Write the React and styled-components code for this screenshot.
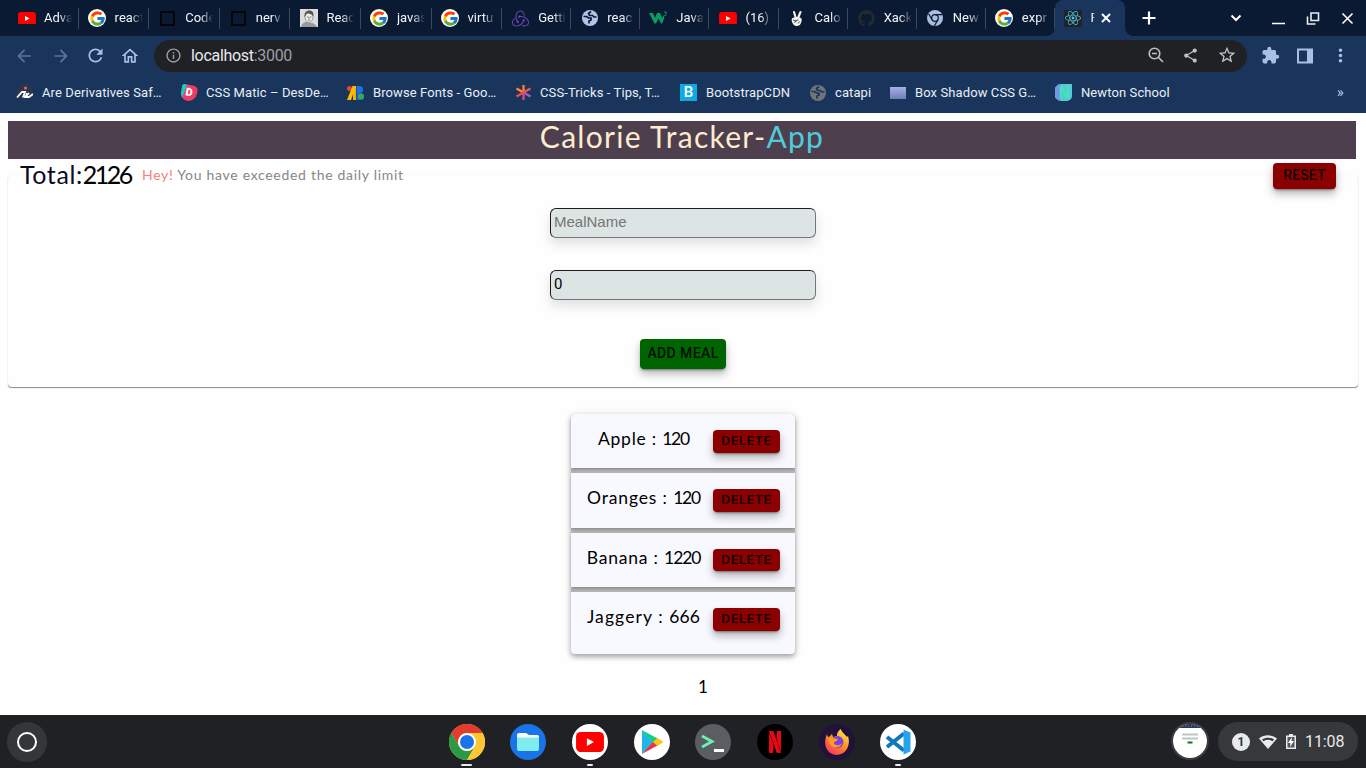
import React from "react";
import styled, { createGlobalStyle } from "styled-components";
import { FcGoogle } from "react-icons/fc";
import { FaGithub, FaReact } from "react-icons/fa";
import { SiRedux, SiNetflix } from "react-icons/si";
import {
  MdExtension, MdShare, MdStarBorder, MdMoreVert, MdRefresh,
  MdArrowBack, MdArrowForward, MdInfoOutline, MdOutlineHome,
} from "react-icons/md";

const Global = createGlobalStyle`
  * { box-sizing: border-box; }
  body { margin: 0; background: #fefefe; overflow: hidden; font-family: Roboto, sans-serif; }
  svg { display: block; flex: none; }
`;

const Screen = styled.div`
  width: 1366px;
  height: 768px;
  display: flex;
  flex-direction: column;
`;

/* ---------- browser ---------- */
const TabStrip = styled.div`
  height: 36px;
  background: #0a1a33;
  display: flex;
  padding-left: 8px;
`;
const Tab = styled.div`
  width: ${(p) => p.$w}px;
  flex: none;
  height: 36px;
  display: flex;
  align-items: center;
  padding-left: 9.5px;
  background: linear-gradient(#39485d, #39485d) right 8px / 1px 21px no-repeat;
`;
const TabIcon = styled.span`
  width: 18px;
  height: 18px;
  flex: none;
  display: flex;
  align-items: center;
  justify-content: center;
  border-radius: ${(p) => (p.$round ? "50%" : "0")};
  background: ${(p) => (p.$round ? "#fff" : "transparent")};
`;
const TabTitle = styled.span`
  margin-left: 8.5px;
  width: ${(p) => p.$w || 28}px;
  overflow: hidden;
  white-space: nowrap;
  font-size: 13px;
  line-height: 18px;
  color: #f2f5fa;
  mask-image: linear-gradient(90deg, #000 55%, transparent 100%);
`;
const ActiveTab = styled.div`
  position: relative;
  width: 70px;
  height: 36px;
  display: flex;
  align-items: center;
  padding-left: 9px;
  background: #1a355b;
  border-radius: 8px 8px 0 0;
  &::before, &::after {
    content: "";
    position: absolute;
    bottom: 0;
    width: 8px;
    height: 8px;
  }
  &::before { left: -8px; background: radial-gradient(circle at 0 0, transparent 7.5px, #1a355b 8px); }
  &::after { right: -8px; background: radial-gradient(circle at 100% 0, transparent 7.5px, #1a355b 8px); }
`;
const ReactBadge = styled.span`
  width: 18px;
  height: 17px;
  display: grid;
  place-items: center;
  background: #20232a;
  color: #53c1de;
`;
const StripControls = styled.div`
  flex: 1;
  display: flex;
  align-items: center;
  padding-left: 17px;
  color: #fff;
`;
const WindowControls = styled.div`
  margin-left: auto;
  margin-right: 12px;
  display: flex;
  align-items: center;
  gap: 21px;
`;
const Toolbar = styled.div`
  height: 39px;
  background: #1a355b;
  display: flex;
  align-items: center;
  padding: 0 12px 0 14px;
  color: #a9bfe4;
`;
const NavButtons = styled.div`
  display: flex;
  align-items: center;
  gap: 17px;
  width: 140px;
  flex: none;
`;
const Dim = styled.span`
  opacity: 0.45;
`;
const Omnibox = styled.div`
  width: 1093px;
  height: 32px;
  margin-top: 1px;
  border-radius: 16px;
  background: #202124;
  color: #bdc1c6;
  display: flex;
  align-items: center;
  padding: 0 10px 2px 11px;
`;
const Address = styled.span`
  margin-left: 9px;
  font-size: 16px;
  letter-spacing: -0.3px;
  color: #e8eaed;
  flex: 1;
  span { color: #9aa0a6; }
`;
const OmniActions = styled.div`
  display: flex;
  align-items: center;
  gap: 18px;
`;
const RightActions = styled.div`
  display: flex;
  align-items: center;
  gap: 17px;
  margin-left: 14px;
`;
const Bookmarks = styled.div`
  height: 38px;
  background: #1a355b;
  display: flex;
  align-items: center;
  padding: 0 0 3px 16px;
  color: #e9eef6;
  font-size: 13px;
  letter-spacing: 0.1px;
`;
const Bookmark = styled.div`
  width: ${(p) => p.$w}px;
  flex: none;
  display: flex;
  align-items: center;
  gap: ${(p) => p.$gap || 9}px;
  white-space: nowrap;
`;
const BootstrapMark = styled.span`
  width: 17px;
  height: 17px;
  background: #0fa9e6;
  color: #fff;
  font: 500 15px/17px Roboto, sans-serif;
  text-align: center;
`;
const More = styled.span`
  margin-left: auto;
  margin-right: 22px;
  padding-bottom: 2px;
  color: #b7c9ea;
  font-size: 15px;
`;

/* ---------- application ---------- */
const Page = styled.main`
  height: 602px;
  display: flex;
  flex-direction: column;
  padding: 8px 8px 0;
  background: #fefefe;
  font-family: Lato, sans-serif;
  color: #000;
`;
const Banner = styled.h1`
  margin: 0 2px 0 0;
  height: 38px;
  background: #4d3f4d;
  color: #ffebcd;
  font-size: 30px;
  font-weight: 400;
  line-height: 31px;
  letter-spacing: 1.3px;
  text-align: center;
  span { color: #51cbdc; }
`;
const Summary = styled.div`
  position: relative;
  height: 16px;
  display: flex;
  align-items: flex-start;
  padding: 0 22px 0 12px;
`;
const Total = styled.span`
  width: 122px;
  font-size: 25px;
  line-height: 30px;
  letter-spacing: 0.6px;
  white-space: nowrap;
  color: #0b0b24;
  span { color: #000; letter-spacing: -2.5px; }
`;
const Warning = styled.span`
  flex: 1;
  font-size: 14px;
  line-height: 32px;
  letter-spacing: 0.7px;
  color: #8b8587;
  span { color: #fa8080; }
`;
const Button = styled.button`
  flex: none;
  border: 0;
  padding: 0 0 ${(p) => p.$lift || 0}px;
  width: ${(p) => p.$w}px;
  height: ${(p) => p.$h}px;
  border-radius: 4px;
  background: ${(p) => p.$bg};
  color: rgba(0, 0, 0, 0.87);
  font: 500 ${(p) => p.$size || 13}px Roboto, sans-serif;
  letter-spacing: ${(p) => p.$track || 0.4}px;
  text-transform: uppercase;
  white-space: nowrap;
  box-shadow: 0 3px 1px -2px rgba(0,0,0,.2), 0 2px 2px rgba(0,0,0,.14), 0 5px 8px rgba(0,0,0,.28);
`;
const FormPaper = styled.section`
  height: 212px;
  border-radius: 4px;
  box-shadow: 0 1px 1px -0.5px rgba(0,0,0,.45), 0 -1px 0 -0.5px rgba(0,0,0,.03);
  display: flex;
  flex-direction: column;
  align-items: center;
  padding-top: 33px;
`;
const Field = styled.input`
  width: 266px;
  height: 30px;
  margin: 0 0 ${(p) => p.$after}px;
  padding: ${(p) => (p.$face ? "1px 3px 3px" : "0 3px 4px")};
  border: 1px solid #767676;
  border-top-color: #1c1c1c;
  border-left-color: #1c1c1c;
  border-radius: 6px;
  background: #dce5e3;
  color: #000;
  font: 15px ${(p) => p.$face || '"Liberation Sans"'}, sans-serif;
  box-shadow: 0 6px 12px rgba(0,0,0,.12);
  outline: none;
  &::placeholder { color: #757575; opacity: 1; }
`;
const MealList = styled.section`
  width: 224px;
  margin: 27px auto 0;
  display: flex;
  flex-direction: column;
  gap: 5px;
  border-radius: 4px;
  background: #b3b3b3;
  box-shadow: 0 3px 5px rgba(0,0,0,.28), 0 1px 8px rgba(0,0,0,.14);
  align-self: center;
`;
const MealRow = styled.div`
  height: ${(p) => p.$h}px;
  display: flex;
  align-items: flex-start;
  padding: 16px 15px 0 15px;
  background: #f8f8ff;
  box-shadow: ${(p) => (p.$last ? "none" : "0 2px 3px -1px rgba(0,0,0,.3)")};
  &:first-child { border-radius: 4px 4px 0 0; }
  &:last-child { border-radius: 0 0 4px 4px; }
`;
const MealName = styled.span`
  width: 115px;
  margin-right: 12px;
  text-align: center;
  white-space: nowrap;
  font-size: 17.5px;
  line-height: 18px;
  letter-spacing: ${(p) => p.$track}px;
  span { letter-spacing: ${(p) => p.$digits}px; }
`;
const PageNumber = styled.div`
  margin-top: 22px;
  padding-left: 40px;
  text-align: center;
  font-size: 17px;
  line-height: 22px;
`;

/* ---------- shelf ---------- */
const Shelf = styled.footer`
  height: 53px;
  background: #202125;
  display: flex;
  padding: 0 8px 0 7px;
`;
const Launcher = styled.div`
  width: 40px;
  height: 40px;
  margin-top: 7px;
  border-radius: 50%;
  background: #35363a;
  display: grid;
  place-items: center;
  &::after {
    content: "";
    width: 16px;
    height: 16px;
    border-radius: 50%;
    border: 2px solid #fff;
  }
`;
const Dock = styled.div`
  display: flex;
  gap: 25.7px;
  padding: 9px 0 0 401.5px;
  flex: none;
`;
const DockItem = styled.div`
  width: 36px;
  display: flex;
  flex-direction: column;
  align-items: center;
  &::after {
    content: "";
    margin-top: 4px;
    width: ${(p) => p.$mark || 0}px;
    height: 2px;
    border-radius: 1px;
    background: #e8eaed;
  }
`;
const Disc = styled.div`
  width: 36px;
  height: 36px;
  border-radius: 50%;
  overflow: hidden;
  display: grid;
  place-items: center;
  background: ${(p) => p.$bg};
`;
const Tray = styled.div`
  display: flex;
  gap: 9px;
  padding-top: 7px;
  margin-left: auto;
`;
const Thumb = styled.div`
  width: 38px;
  height: 38px;
  border-radius: 50%;
  border: 2px solid #3b3c40;
  overflow: hidden;
`;
const Status = styled.div`
  width: 140px;
  height: 39px;
  border-radius: 20px;
  background: #37383b;
  color: #e8eaed;
  display: flex;
  align-items: center;
  padding-left: 14px;
  font-size: 16px;
`;
const Count = styled.span`
  width: 18px;
  height: 18px;
  border-radius: 50%;
  background: #e8eaed;
  color: #303134;
  font: 700 12px/18px Roboto, sans-serif;
  text-align: center;
`;
const Clock = styled.span`
  margin-left: 9px;
  letter-spacing: -0.1px;
`;

/* ---------- drawings ---------- */
const YouTube = ({ w = 18 }) => (
  <svg width={w} height={w * 0.72} viewBox="0 0 18 13">
    <rect width="18" height="13" rx="3" fill="#f00" />
    <path d="M7 4v5l4.600-2.500z" fill="#fff" />
  </svg>
);
const Square = () => (
  <svg width="15" height="15" viewBox="0 0 15 15">
    <rect x="1" y="1" width="13" height="13" fill="none" stroke="#000" strokeWidth="1.600" />
  </svg>
);
const Portrait = () => (
  <svg width="18" height="18" viewBox="0 0 18 18">
    <rect width="18" height="18" fill="#dcdcdc" />
    <path d="M1 18c1-4 4-5 5-5l5 1c3 0 5 2 6 4z" fill="#999" />
    <ellipse cx="9" cy="8" rx="4" ry="5.300" fill="#eee" stroke="#777" strokeWidth=".7" />
    <path d="M4.500 8C4 3 7 1 10 1.500s4 3 3.300 6C12 5 9 4 7 4.500z" fill="#555" />
    <path d="M7 8h1.500M10 8h1.500M8 11h2.500M9 8v2" stroke="#555" strokeWidth=".7" />
  </svg>
);
const Globe = ({ color, land }) => (
  <svg width="16" height="16" viewBox="0 0 16 16">
    <circle cx="8" cy="8" r="8" fill={color} />
    <path d="M1.500 6.500h3l2 1.500h2.500v2l-2 1v2.500" fill="none" stroke={land} strokeWidth="1.700" />
    <path d="M9 1.500L6.500 3.500l1 2h3l1.500 1.500h2.500" fill="none" stroke={land} strokeWidth="1.700" />
  </svg>
);
const Zigzag = () => (
  <svg width="19" height="14" viewBox="0 0 19 14">
    <path d="M0 2h4l2 5 2-5h3l2 5 1.500-2.500 1 2L13 12.500h-1L9.500 7.500 7 12.500H5.500z" fill="#0a9d63" />
    <path d="M15 1h2.500l-1.300 1.500c2 .2 1.500 2.500-1 2" fill="none" stroke="#0a9d63" strokeWidth=".9" />
  </svg>
);
const Victory = () => (
  <svg width="14" height="17" viewBox="0 0 14 17">
    <path d="M4 2l1.800 6M10.500 2L8 8" stroke="#f6f3ea" strokeWidth="2.100" strokeLinecap="round" />
    <path d="M2 8.500c2-1.500 6-2 9-.5 1.200 1 .8 4-.5 6-1.500 2.500-5 2.500-6.800.7C2.200 13 1 10.500 2 8.500z" fill="#f6f3ea" />
    <path d="M3 10l3 .8 2.500-1M4 12.500l2.500-1.200M8 13.500l1.500-2" fill="none" stroke="#3b3a36" strokeWidth=".9" />
  </svg>
);
const ChromeMono = () => (
  <svg width="16" height="16" viewBox="0 0 16 16">
    <circle cx="8" cy="8" r="8" fill="#a9bddf" />
    <circle cx="8" cy="8" r="3.900" fill="#0a1a33" />
    <circle cx="8" cy="8" r="2.700" fill="#a9bddf" />
    <path d="M8 4.600h7.200M5.100 9.800L1.600 3.700M10.900 9.800L7.400 15.900" stroke="#0a1a33" strokeWidth="1.200" />
  </svg>
);
const ZoomOut = () => (
  <svg width="16" height="16" viewBox="0 0 16 16" fill="none" stroke="#bdc1c6" strokeWidth="1.600">
    <circle cx="6.500" cy="6.500" r="5.300" />
    <path d="M10.500 10.500l4.500 4.500M4 6.500h5" />
  </svg>
);
const Derivatives = () => (
  <svg width="17" height="17" viewBox="0 0 17 17">
    <circle cx="8.500" cy="8" r="8" fill="#2b3551" />
    <path d="M1 13.500L6 8h3l-1.700 4.500 2.700-.2 3-3.300M11 9l-1.500 4h3.500l4-3" fill="none" stroke="#fff" strokeWidth="1.800" />
    <circle cx="9.500" cy="4" r="1.500" fill="#ef6a4a" />
  </svg>
);
const MaticMark = styled.span`
  width: 16px;
  height: 16px;
  border-radius: 15% 35% 65% 55%;
  transform: rotate(10deg);
  background: linear-gradient(100deg, #20c8b8 0 24%, #f23a67 25%);
  color: #fff;
  font: 900 11px/16px Roboto, sans-serif;
  text-align: center;
`;
const FontsIcon = () => (
  <svg width="17" height="14" viewBox="0 0 17 14">
    <circle cx="2.500" cy="2.500" r="2.500" fill="#ea4335" />
    <path d="M6 0h3v14H6z" fill="#f9ab00" />
    <path d="M5.500 0H9L4 14H0z" fill="#fbbc04" />
    <path d="M9.500 0h3a3.500 3.500 0 010 7h-3z" fill="#1a73e8" />
    <path d="M9.500 7h4a3.500 3.500 0 010 7h-4z" fill="#1967d2" />
    <circle cx="14" cy="10.500" r="3" fill="#34a853" />
  </svg>
);
const Asterisk = () => (
  <svg width="17" height="17" viewBox="0 0 17 17" strokeWidth="2.400">
    <path d="M8.500 1v7.500" stroke="#ff7a3c" />
    <path d="M8.500 8.500V16" stroke="#d94a78" />
    <path d="M1.500 4.500l7 4" stroke="#ff8a1e" />
    <path d="M8.500 8.500l7 4" stroke="#8e64cf" />
    <path d="M15.500 4.500l-7 4" stroke="#f0524f" />
    <path d="M8.500 8.500l-7 4" stroke="#e8456a" />
  </svg>
);
const Swatch = () => (
  <svg width="16" height="12" viewBox="0 0 16 12">
    <defs><linearGradient id="sw" x2="0" y2="1"><stop stopColor="#a5b1e0" /><stop offset="1" stopColor="#6d7db8" /></linearGradient></defs>
    <rect width="16" height="12" fill="url(#sw)" />
  </svg>
);
const Newton = () => (
  <svg width="17" height="17" viewBox="0 0 17 17">
    <path d="M6 0h11v12a5 5 0 01-5 5H6A7 8.500 0 016 0z" fill="#58c8d8" />
    <path d="M6 0a7 8.500 0 000 17z" fill="#6d98e6" />
    <path d="M6 2v13M6 2l7 13M13 1v14" stroke="#45e0bd" strokeWidth="2.600" />
  </svg>
);
const ChromeDisc = () => (
  <svg width="36" height="36" viewBox="0 0 36 36">
    <circle cx="18" cy="18" r="18" fill="#fbc02d" />
    <path d="M2.400 9A18 18 0 0133.600 9H18a9 9 0 00-7.800 13.500z" fill="#e33b2e" />
    <path d="M2.400 9A18 18 0 0018 36l7.800-13.500a9 9 0 01-15.600 0z" fill="#2b9a47" />
    <path d="M33.600 9A18 18 0 0118 36l7.800-13.500A9 9 0 0025 12z" fill="#fcc934" />
    <path d="M18 9h15.600l1 3H18z" fill="#fcc934" />
    <circle cx="18" cy="18" r="9" fill="#fff" />
    <circle cx="18" cy="18" r="7" fill="#1a73e8" />
  </svg>
);
const FilesIcon = () => (
  <svg width="24" height="20" viewBox="0 0 24 20">
    <path d="M1 3a2 2 0 012-2h7l3 2h8a2 2 0 012 2v12H1z" fill="#fff" />
    <path d="M1 5.500h22V17a2 2 0 01-2 2H3a2 2 0 01-2-2z" fill="#80ecf0" />
  </svg>
);
const PlayIcon = () => (
  <svg width="24" height="26" viewBox="0 0 24 26">
    <path d="M2 1v24l11-12z" fill="#1fb6e8" />
    <path d="M2 1l15.500 8.500L13 13.500z" fill="#10d07c" />
    <path d="M2 25l15.500-8.500L13 12.500z" fill="#e6364b" />
    <path d="M17.500 9l6 4-6 4-4.500-4z" fill="#fcc419" />
  </svg>
);
const TerminalIcon = () => (
  <svg width="24" height="20" viewBox="0 0 24 20" fill="none">
    <path d="M1 4l10 5.500L1 15" stroke="#6ff0b0" strokeWidth="2.800" />
    <path d="M13 18.500H23" stroke="#fff" strokeWidth="2.800" />
  </svg>
);
const FirefoxIcon = () => (
  <svg width="28" height="28" viewBox="0 0 28 28">
    <defs>
      <linearGradient id="fx" x1=".8" y1="0" x2=".2" y2="1">
        <stop stopColor="#fff04a" /><stop offset=".45" stopColor="#ff9522" /><stop offset="1" stopColor="#f4305f" />
      </linearGradient>
    </defs>
    <path d="M4 6c0 2 1 3 2 3l3-3 1 3 4-1c-.5-3 2-6 4-7 0 3 4 5 6 8l1-1c3 9-2 19-11 19S-1 18 4 6z" fill="url(#fx)" />
    <circle cx="14.500" cy="14" r="6" fill="#7a42d8" />
    <path d="M5 11c4-2 7 0 10 0-1 3-4 2-4 4 1 3 6 3 8 0-1 6-12 7-14-4z" fill="#ff9a28" />
  </svg>
);
const CodeIcon = () => (
  <svg width="26" height="26" viewBox="0 0 26 26">
    <path d="M19 4.500L2 18M2 8l17 13.500" stroke="#0f78bd" strokeWidth="4" />
    <path d="M18.500 0.500L25.500 3.500v19l-7 3z" fill="#29a3ee" />
  </svg>
);
const WindowThumb = () => (
  <svg width="34" height="34" viewBox="0 0 34 34">
    <rect width="34" height="34" fill="#fff" />
    <rect width="34" height="4" fill="#243a60" />
    <path d="M9 2h18" stroke="#cf6d73" strokeDasharray="1 2" />
    <path d="M9 10.500h16M9 14.500h16" stroke="#bfc6c5" strokeWidth="1.800" />
    <path d="M14.500 18.500h5" stroke="#087b18" strokeWidth="2" />
  </svg>
);

const google = <FcGoogle size={17} />;
const tabs = [
  ["Adva", <YouTube />],
  ["react", google, true],
  ["Code", <Square />],
  ["nerv", <Square />],
  ["Reac", <Portrait />],
  ["javas", google, true],
  ["virtu", google, true],
  ["Getti", <SiRedux size={17} color="#6a45b5" />],
  ["reac", <Globe color="#b2c5e8" land="#0a1a33" />],
  ["Java", <Zigzag />],
  ["(16) ", <YouTube />],
  ["Calo", <Victory />],
  ["Xack", <FaGithub size={17} color="#24292f" />],
  ["New", <ChromeMono />],
  ["expr", google, true],
];
const bookmarks = [
  ["Are Derivatives Saf…", <Derivatives />, 165],
  ["CSS Matic – DesDe…", <MaticMark>D</MaticMark>, 166],
  ["Browse Fonts - Goo…", <FontsIcon />, 168],
  ["CSS-Tricks - Tips, T…", <Asterisk />, 165, 8],
  ["BootstrapCDN", <BootstrapMark>B</BootstrapMark>, 130],
  ["catapi", <Globe color="#717579" land="#1a355b" />, 80],
  ["Box Shadow CSS G…", <Swatch />, 165],
  ["Newton School", <Newton />, 150],
];
const meals = [
  { name: "Apple", kcal: 120, h: 54, track: 0.75, digits: -1.2, bh: 23 },
  { name: "Oranges", kcal: 120, h: 55, track: 0.85, digits: -1.2, bh: 23 },
  { name: "Banana", kcal: 1220, h: 54, track: 0.8, digits: -1.1, bh: 22 },
  { name: "Jaggery", kcal: 666, h: 62, track: 1.1, digits: 0.1, bh: 23 },
];

function Browser() {
  return (
    <>
      <TabStrip>
        {tabs.map(([title, icon, round], i) => (
          <Tab key={i} $w={i < 7 ? 70.6 : 69.1}>
            <TabIcon $round={round}>{icon}</TabIcon>
            <TabTitle>{title}</TabTitle>
          </Tab>
        ))}
        <ActiveTab>
          <ReactBadge><FaReact size={16} /></ReactBadge>
          <TabTitle $w={5}>R</TabTitle>
          <svg width="10" height="10" viewBox="0 0 10 10" style={{ marginLeft: 6 }}>
            <path d="M1 1l8 8M9 1L1 9" stroke="#fff" strokeWidth="2" />
          </svg>
        </ActiveTab>
        <StripControls>
          <svg width="14" height="14" viewBox="0 0 14 14"><path d="M7 .5v13M.5 7h13" stroke="#fff" strokeWidth="2.200" /></svg>
          <WindowControls>
            <svg width="12" height="8" viewBox="0 0 12 8" fill="none" style={{ marginRight: 9 }}><path d="M1.500 1.500L6 6l4.500-4.500" stroke="#fff" strokeWidth="2" /></svg>
            <svg width="13" height="14" viewBox="0 0 13 14"><path d="M0 12.500h13" stroke="#fff" strokeWidth="1.500" /></svg>
            <svg width="14" height="13" viewBox="0 0 14 13" fill="none" stroke="#e8edf5" strokeWidth="1.600"><path d="M5 1h7.500v7.500H5zM1.500 4.500v7.500H9.500" /></svg>
            <svg width="13" height="13" viewBox="0 0 13 13"><path d="M1.500 1.500l10 10M11.500 1.500l-10 10" stroke="#fff" strokeWidth="1.600" /></svg>
          </WindowControls>
        </StripControls>
      </TabStrip>
      <Toolbar>
        <NavButtons>
          <Dim><MdArrowBack size={20} /></Dim>
          <Dim><MdArrowForward size={20} /></Dim>
          <MdRefresh size={21} style={{ marginLeft: -3 }} />
          <MdOutlineHome size={20} style={{ marginLeft: -3 }} />
        </NavButtons>
        <Omnibox>
          <MdInfoOutline size={17} color="#9aa0a6" />
          <Address>localhost<span>:3000</span></Address>
          <OmniActions>
            <ZoomOut />
            <MdShare size={17} />
            <MdStarBorder size={20} />
          </OmniActions>
        </Omnibox>
        <RightActions>
          <MdExtension size={19} />
          <svg width="16" height="16" viewBox="0 0 16 16"><path d="M1 1.500h14v13H1z" fill="none" stroke="#a9bfe4" strokeWidth="2" /><path d="M10 1h6v14h-6z" fill="#a9bfe4" /></svg>
          <MdMoreVert size={21} />
        </RightActions>
      </Toolbar>
      <Bookmarks>
        {bookmarks.map(([label, icon, w, gap]) => (
          <Bookmark key={label} $w={w} $gap={gap}>{icon}{label}</Bookmark>
        ))}
        <More>»</More>
      </Bookmarks>
    </>
  );
}

function Tracker() {
  return (
    <Page>
      <Banner>Calorie Tracker-<span>App</span></Banner>
      <Summary>
        <Total>Total:<span>2126</span></Total>
        <Warning><span>Hey!</span> You have exceeded the daily limit</Warning>
        <Button $w={63} $h={26} $bg="#8b0000" $size={14} $lift={2} $track={0.1} style={{ marginTop: 4 }}>Reset</Button>
      </Summary>
      <FormPaper>
        <Field $after={32} placeholder="MealName" />
        <Field $after={39} $face="Roboto" defaultValue="0" />
        <Button $w={86} $h={30} $bg="#006400" $size={14} $lift={2}>Add Meal</Button>
      </FormPaper>
      <MealList>
        {meals.map((m, i) => (
          <MealRow key={m.name} $h={m.h} $last={i === meals.length - 1}>
            <MealName $track={m.track} $digits={m.digits}>{m.name} : <span>{m.kcal}</span></MealName>
            <Button $w={67} $h={m.bh} $bg="#8b0000" $size={13.5} $lift={3} $track={0.5}>Delete</Button>
          </MealRow>
        ))}
      </MealList>
      <PageNumber>1</PageNumber>
    </Page>
  );
}

function SystemShelf() {
  return (
    <Shelf>
      <Launcher />
      <Dock>
        <DockItem $mark={11}><ChromeDisc /></DockItem>
        <DockItem><Disc $bg="#1a73e8"><FilesIcon /></Disc></DockItem>
        <DockItem $mark={6}><Disc $bg="#fff"><YouTube w={28} /></Disc></DockItem>
        <DockItem><Disc $bg="#fff"><PlayIcon /></Disc></DockItem>
        <DockItem><Disc $bg="#5a5e63"><TerminalIcon /></Disc></DockItem>
        <DockItem><Disc $bg="#000"><SiNetflix size={22} color="#e50914" /></Disc></DockItem>
        <DockItem><Disc $bg="#20123a"><FirefoxIcon /></Disc></DockItem>
        <DockItem $mark={6}><Disc $bg="#fff"><CodeIcon /></Disc></DockItem>
      </Dock>
      <Tray>
        <Thumb><WindowThumb /></Thumb>
        <Status>
          <Count>1</Count>
          <svg width="18" height="14" viewBox="0 0 18 14" style={{ marginLeft: 9 }}>
            <path d="M0 3.500C5-.8 13-.8 18 3.500L9 14z" fill="#e8eaed" />
            <path d="M3 4.500c4-2.500 8-2.500 12 0l-1.500 1.700c-3-1.800-6-1.800-9 0z" fill="#37383b" />
          </svg>
          <svg width="10" height="15" viewBox="0 0 10 15" style={{ marginLeft: 9 }}>
            <path d="M3 0h4v1.500h3V15H0V1.500h3z" fill="#e8eaed" />
            <path d="M1.500 3h7v10.500h-7z" fill="#55575a" />
            <path d="M6 3L2 9h2.500L4 13l4-6H5.500z" fill="#fff" />
          </svg>
          <Clock>11:08</Clock>
        </Status>
      </Tray>
    </Shelf>
  );
}

export default function App() {
  return (
    <Screen>
      <Global />
      <Browser />
      <Tracker />
      <SystemShelf />
    </Screen>
  );
}
